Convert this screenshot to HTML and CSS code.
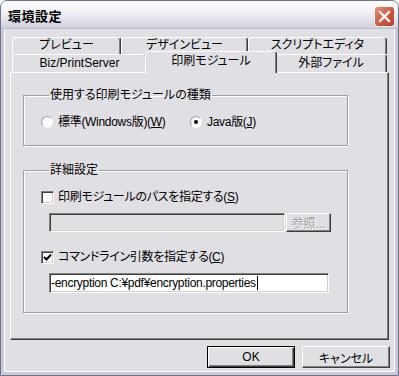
FILE: index.html
```html
<!DOCTYPE html>
<html lang="ja">
<head>
	<meta charset="UTF-8">
	<title>環境設定</title>
	<link rel="stylesheet" href="styles.css">
</head>
<body>
	<div class="window">
		<div class="titlebar">
			<span class="title">環境設定</span>
			<span class="close">
				<svg width="21" height="21" viewBox="0 0 21 21">
					<defs>
						<linearGradient id="closebg" x1="0" y1="0" x2="1" y2="1">
							<stop offset="0" stop-color="#e9937c"/>
							<stop offset="0.5" stop-color="#d65a43"/>
							<stop offset="1" stop-color="#b8382a"/>
						</linearGradient>
					</defs>
					<rect x="0.5" y="0.5" width="20" height="20" rx="3" fill="url(#closebg)" stroke="#fff"/>
					<path d="M6 6 L15 15 M15 6 L6 15" stroke="#fff" stroke-width="2.4" stroke-linecap="square"/>
				</svg>
			</span>
		</div>
		<div class="client">
			<div class="tab-row">
				<div class="tab t1">プレビュー</div>
				<div class="tab t2">デザインビュー</div>
				<div class="tab t3">スクリプトエディタ</div>
			</div>
			<div class="tab-row front">
				<div class="tab t4">Biz/PrintServer</div>
				<div class="tab t5 selected">印刷モジュール</div>
				<div class="tab t6">外部ファイル</div>
			</div>
			<div class="panel">
				<fieldset class="group kind">
					<legend>使用する印刷モジュールの種類</legend>
					<div class="radios">
						<label class="option first"><span class="radio"></span>標準(Windows版)(<u>W</u>)</label>
						<label class="option"><span class="radio checked"></span>Java版(<u>J</u>)</label>
					</div>
				</fieldset>
				<fieldset class="group detail">
					<legend>詳細設定</legend>
					<label class="option"><span class="check"></span>印刷モジュールのパスを指定する(<u>S</u>)</label>
					<div class="field-row">
						<div class="textbox disabled path"></div>
						<div class="button disabled browse">参照...</div>
					</div>
					<label class="option second"><span class="check"><svg width="9" height="9" viewBox="0 0 9 9"><path d="M1 4 L3.5 6.5 L8 1.5" fill="none" stroke="#000" stroke-width="2"/></svg></span>コマンドライン引数を指定する(<u>C</u>)</label>
					<div class="field-row">
						<div class="textbox args">-encryption C:¥pdf¥encryption.properties<span class="caret"></span></div>
					</div>
				</fieldset>
			</div>
			<div class="actions">
				<div class="button default">OK</div>
				<div class="button">キャンセル</div>
			</div>
		</div>
	</div>
</body>
</html>
```

FILE: styles.css
```css
*{
	margin: 0;
	padding: 0;
	box-sizing: border-box;
}
body{
	background: #fff;
	font-family: "Liberation Sans", "Noto Sans CJK JP", sans-serif;
	font-size: 12px;
	font-feature-settings: "palt";
	color: #000;
}
.window{
	width: 399px;
	height: 376px;
	display: flex;
	flex-direction: column;
	background: #e0dfe3;
	border: 1px solid #72728e;
	border-radius: 7px 7px 0 0;
	overflow: hidden;
}
/* タイトルバー */
.titlebar{
	height: 28px;
	flex: none;
	display: flex;
	align-items: center;
	justify-content: space-between;
	padding: 0 3px 0 7px;
	background: linear-gradient(#fdfdfe 0, #f4f4f8 35%, #e2e2ea 70%, #cfcfdc 100%);
	border-bottom: 1px solid #bdbdcc;
}
.title{
	font-family: "Noto Sans CJK JP", sans-serif;
	font-weight: bold;
	font-size: 13px;
	letter-spacing: 0.5px;
	padding-top: 2px;
}
.close{
	display: flex;
	margin-top: 4px;
}
/* クライアント領域 */
.client{
	flex: 1;
	display: flex;
	flex-direction: column;
	padding: 8px 0 0 6px;
	border: 3px solid #c9c9d8;
	border-top: 0;
	box-shadow: inset 1px 0 #fff, inset -1px -1px #fff;
}
.tab-row{
	display: flex;
	height: 17px;
	margin-left: 2px;
}
.tab-row.front{
	height: 18px;
	align-items: flex-end;
}
.tab{
	height: 100%;
	border: 1px solid;
	border-bottom: 0;
	border-color: #fff #404040 transparent #fff;
	border-radius: 3px 3px 0 0;
	box-shadow: inset -1px 0 #808080;
	text-align: center;
	line-height: 15px;
	background: #e0dfe3;
}
.front .tab{
	line-height: 16px;
}
.t1{ width: 109px; }
.t2{ width: 127px; }
.t3{ width: 139px; }
.t4{ width: 135px; }
.t5{ width: 128px; }
.t6{ width: 112px; }
.tab.selected{
	width: 132px;
	height: 22px;
	margin: 0 -2px -1px;
	z-index: 2;
	line-height: 18px;
}
/* タブページ */
.panel{
	width: 379px;
	height: 268px;
	padding: 15px 0 0 12px;
	border: 1px solid;
	border-color: #fff #404040 #404040 #fff;
	box-shadow: inset -1px -1px #808080;
}
.group{
	width: 325px;
	border: 1px solid #a0a0a4;
	box-shadow: 1px 1px 0 #fff, inset 1px 1px 0 #fff;
	padding: 0 0 0 17px;
}
.group legend{
	margin-left: 8px;
	padding: 0 1px;
	line-height: 14px;
}
.group.kind{
	padding-top: 13px;
	padding-bottom: 16px;
}
.group.detail{
	margin-top: 17px;
	padding-top: 13px;
	padding-bottom: 19px;
}
.radios{
	display: flex;
}
.option{
	display: flex;
	align-items: center;
	height: 14px;
	line-height: 14px;
	letter-spacing: -0.3px;
}
.option.first{
	width: 149px;
}
.option.second{
	margin-top: 18px;
}
.radio{
	width: 12px;
	height: 12px;
	margin-right: 5px;
	border-radius: 50%;
	border: 1px solid;
	border-color: #a4a4a8 #fff #fff #a4a4a8;
	background: radial-gradient(circle at 60% 60%, #fff 0, #fff 45%, #e6e6ea 100%);
	display: flex;
	align-items: center;
	justify-content: center;
}
.radio.checked::after{
	content: "";
	width: 4px;
	height: 4px;
	border-radius: 50%;
	background: #000;
}
.check{
	width: 13px;
	height: 13px;
	margin-right: 4px;
	border: 1px solid;
	border-color: #808080 #fff #fff #808080;
	box-shadow: inset 1px 1px #404040, inset -1px -1px #d4d0c8;
	background: #fff;
	display: flex;
	align-items: center;
	justify-content: center;
}
.field-row{
	display: flex;
	margin: 9px 0 0 8px;
}
.textbox{
	height: 19px;
	border: 1px solid;
	border-color: #808080 #fff #fff #808080;
	box-shadow: inset 1px 1px #404040, inset -1px -1px #d4d0c8;
	background: #fff;
	padding: 0 1px;
	display: flex;
	align-items: center;
	white-space: nowrap;
	letter-spacing: -0.3px;
}
.textbox.path{
	width: 236px;
}
.textbox.disabled{
	background: #e0dfe3;
}
.textbox.args{
	width: 280px;
	height: 20px;
}
.caret{
	width: 1px;
	height: 14px;
	margin-left: 1px;
	background: #000;
}
.button{
	display: flex;
	align-items: center;
	justify-content: center;
	height: 22px;
	border: 1px solid;
	border-color: #fff #404040 #404040 #fff;
	box-shadow: inset -1px -1px #808080;
	background: #e0dfe3;
}
.button.browse{
	width: 45px;
	height: 19px;
	margin-left: 1px;
}
.button.disabled{
	color: #a0a0a4;
	text-shadow: 1px 1px 0 #fff;
}
.actions{
	display: flex;
	justify-content: flex-end;
	gap: 7px;
	width: 380px;
	margin-top: 6px;
}
.actions .button{
	width: 88px;
}
.button.default{
	border: 1px solid #000;
	box-shadow: inset 1px 1px #fff, inset -1px -1px #404040, inset -2px -2px #808080;
}
```
